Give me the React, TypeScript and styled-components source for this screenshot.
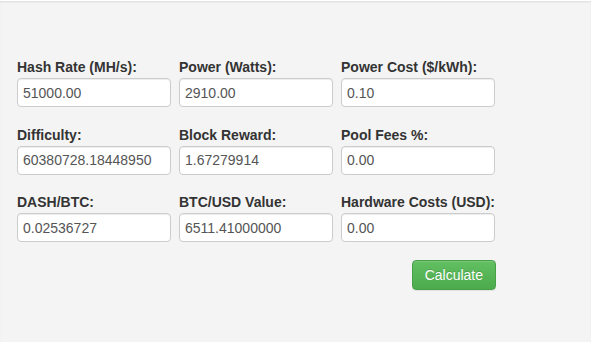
import React from 'react';
import styled, { createGlobalStyle } from 'styled-components';

interface IField {
    label: string;
    value: string;
}

const fields: IField[] = [
    { label: 'Hash Rate (MH/s):', value: '51000.00' },
    { label: 'Power (Watts):', value: '2910.00' },
    { label: 'Power Cost ($/kWh):', value: '0.10' },
    { label: 'Difficulty:', value: '60380728.18448950' },
    { label: 'Block Reward:', value: '1.67279914' },
    { label: 'Pool Fees %:', value: '0.00' },
    { label: 'DASH/BTC:', value: '0.02536727' },
    { label: 'BTC/USD Value:', value: '6511.41000000' },
    { label: 'Hardware Costs (USD):', value: '0.00' },
];

const App = (): JSX.Element => {
    return (
        <>
            <GlobalStyle />
            <SPanel>
                <SForm>
                    {fields.map((field) => (
                        <SGroup key={field.label}>
                            <SLabel>{field.label}</SLabel>
                            <SInput type="text" defaultValue={field.value} />
                        </SGroup>
                    ))}
                </SForm>
                <SActions>
                    <SButton type="button">Calculate</SButton>
                </SActions>
            </SPanel>
        </>
    );
};

const FIELD_WIDTH = 154;

const GlobalStyle = createGlobalStyle`
    html, body {
        margin: 0;
        padding: 0;
        background: #ffffff;
    }
    body {
        font-family: "Liberation Sans", Arial, sans-serif;
        font-size: 14px;
        color: #333333;
    }
`;

const SPanel = styled.div`
    box-sizing: border-box;
    width: 591px;
    height: 342px;
    margin-top: 1px;
    padding: 55px 0 0 17px;
    background: #f4f4f4;
    border-top: 1px solid #e2e2e2;
    box-shadow: inset 0 1px 2px rgba(0, 0, 0, 0.04);
`;

const SForm = styled.div`
    display: grid;
    grid-template-columns: repeat(3, ${FIELD_WIDTH}px);
    column-gap: 8px;
    row-gap: 17.5px;
`;

const SGroup = styled.div`
    display: flex;
    flex-direction: column;
`;

const SLabel = styled.label`
    display: block;
    font-weight: bold;
    font-size: 14px;
    line-height: 20px;
    color: #333333;
    margin-bottom: 1px;
    white-space: nowrap;
`;

const SInput = styled.input`
    box-sizing: border-box;
    width: 100%;
    height: 29px;
    padding: 0 5px;
    font-family: "Liberation Sans", Arial, sans-serif;
    font-size: 14px;
    color: #555555;
    background: #ffffff;
    border: 1px solid #cccccc;
    border-radius: 4px;
    box-shadow: inset 0 1px 1px rgba(0, 0, 0, 0.075);
    outline: none;
`;

const SActions = styled.div`
    display: flex;
    justify-content: flex-end;
    width: ${FIELD_WIDTH * 3 + 16 + 1}px;
    margin-top: 18px;
`;

const SButton = styled.button`
    box-sizing: border-box;
    height: 30px;
    padding: 0 12px;
    font-family: "Liberation Sans", Arial, sans-serif;
    font-size: 14px;
    color: #ffffff;
    background: linear-gradient(to bottom, #62bf62 0%, #4cab4c 100%);
    border: 1px solid #479f47;
    border-radius: 4px;
    text-shadow: 0 -1px 0 rgba(0, 0, 0, 0.15);
    box-shadow: inset 0 1px 0 rgba(255, 255, 255, 0.15), 0 1px 1px rgba(0, 0, 0, 0.075);
    cursor: pointer;
`;

export default App;
